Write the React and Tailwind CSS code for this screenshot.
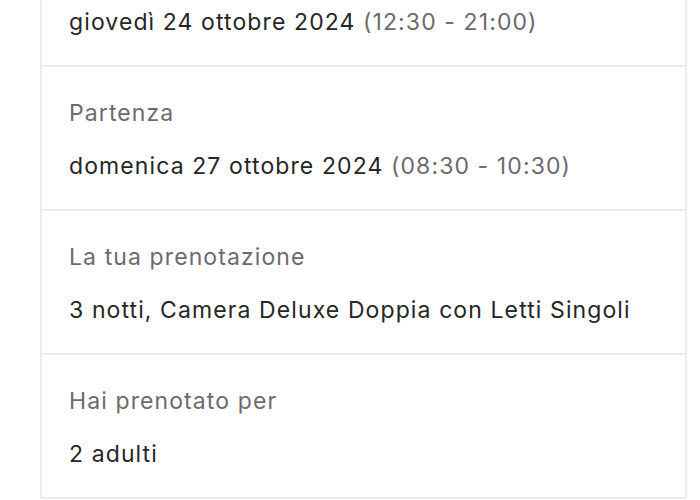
import React from 'react';

const rows = [
  { label: 'Partenza', value: 'domenica 27 ottobre 2024', extra: '(08:30 - 10:30)' },
  { label: 'La tua prenotazione', value: '3 notti, Camera Deluxe Doppia con Letti Singoli' },
  { label: 'Hai prenotato per', value: '2 adulti' },
];

export default function App() {
  return (
    <div className="w-[700px] h-[500px] overflow-hidden bg-white font-['Inter',sans-serif] text-[23px] leading-[32px] tracking-[1.1px]">
      <div className="ml-[40px] w-[647px] border-x-2 border-[#ececec]">
        <div className="border-b-2 border-[#ececec] pl-[27px] pt-[6px] pb-[27px]">
          <p className="text-[#262626]">
            giovedì 24 ottobre 2024 <span className="text-[#6b6b6b]">(12:30 - 21:00)</span>
          </p>
        </div>
        {rows.map((row) => (
          <div key={row.label} className="border-b-2 border-[#ececec] pl-[27px] pt-[30px] pb-[27px]">
            <p className="text-[#6b6b6b]">{row.label}</p>
            <p className="mt-[21px] text-[#262626]">
              {row.value}
              {row.extra && <span className="text-[#6b6b6b]"> {row.extra}</span>}
            </p>
          </div>
        ))}
      </div>
    </div>
  );
}
